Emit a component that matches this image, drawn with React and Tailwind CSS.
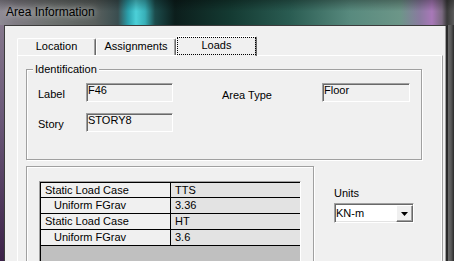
export default function App() {
  const rows = [
    { a: 'Static Load Case', b: 'TTS', indent: false, h: 'h-[15px]' },
    { a: 'Uniform FGrav', b: '3.36', indent: true, h: 'h-[16px]' },
    { a: 'Static Load Case', b: 'HT', indent: false, h: 'h-[16px]' },
    { a: 'Uniform FGrav', b: '3.6', indent: true, h: 'h-[16px]' },
  ];

  const TextBox = ({ w, text }) => (
    <div
      className={`${w} h-[19px] shrink-0 bg-[#f0f0f0] border border-[#a0a0a0] border-b-white border-r-white shadow-[inset_1px_1px_0_#696969] pl-[1px]`}
    >
      {text}
    </div>
  );

  return (
    <div className="w-[454px] h-[261px] overflow-hidden flex flex-col font-['Liberation_Sans',Arial,sans-serif] text-[11px] leading-[13px] text-black">
      {/* Title bar */}
      <div className="h-[25px] shrink-0 pl-[6px] pt-[5px] bg-[linear-gradient(to_bottom,rgba(0,0,0,0.3),rgba(0,0,0,0)_45%),linear-gradient(to_right,#8e8a94_0px,#807c84_15px,#6e7270_50px,#5a605e_95px,#3a4e50_118px,#2aa0ac_128px,#4cd0d8_136px,#38b0b8_145px,#1c4c4c_155px,#0c1e1c_175px,#143a32_230px,#2a5c52_290px,#588a7e_350px,#6c9688_400px,#8a7aa0_420px,#a878b8_432px,#7a6a80_442px,#3a3a3a_447px,#5a5a5a_454px)]">
        <span className="text-[12px] leading-[14px] [text-shadow:0_0_6px_rgba(255,255,255,0.8)]">
          Area Information
        </span>
      </div>

      <div className="flex-1 flex min-h-0">
        {/* left background strip */}
        <div className="w-[4px] shrink-0 bg-[linear-gradient(to_bottom,#85778c,#6a5878_40%,#3c2248)]" />

        {/* dialog client */}
        <div className="w-[444px] shrink-0 bg-[#f0f0f0] border-l border-t border-[#3c3c3c] border-r-2 border-r-[#2a2a2a] shadow-[inset_-1px_0_0_#a0a0a0] flex flex-col pl-[12px] pt-[10px]">
          {/* Tabs */}
          <div className="flex items-end h-[19px] shrink-0">
            <div className="w-[79px] h-[17px] border-t border-l border-white border-r border-r-[#696969] shadow-[inset_-1px_0_0_#a0a0a0] rounded-t-[2px] text-center pt-[1px]">
              Location
            </div>
            <div className="w-[80px] h-[17px] border-t border-l border-white border-r border-r-[#696969] shadow-[inset_-1px_0_0_#a0a0a0] rounded-t-[2px] text-center pt-[1px]">
              Assignments
            </div>
            <div className="relative z-10 -mb-px w-[81px] h-[20px] bg-[#f0f0f0] border-t border-l border-white border-r border-r-[#696969] shadow-[inset_-1px_0_0_#a0a0a0] rounded-t-[2px]">
              <div className="h-[18px] border border-dotted border-black text-center pt-[1px]">
                Loads
              </div>
            </div>
          </div>

          {/* Tab panel */}
          <div className="w-[426px] flex-1 flex flex-col border-t border-l border-white border-r border-r-[#a0a0a0] shadow-[inset_-1px_0_0_#ffffff] pl-[8px] pt-[13px]">
            {/* Identification group */}
            <div className="relative w-[396px] h-[91px] shrink-0 border border-[#a0a0a0] shadow-[inset_1px_1px_0_#ffffff,1px_1px_0_#ffffff] pt-[13px] pl-[11px]">
              <span className="absolute left-[6px] -top-[7px] px-[2px] bg-[#f0f0f0]">
                Identification
              </span>
              <div className="flex items-start">
                <div className="w-[48px] shrink-0 pt-[5px]">Label</div>
                <TextBox w="w-[87px]" text="F46" />
                <div className="ml-[49px] w-[100px] shrink-0 pt-[6px]">Area Type</div>
                <TextBox w="w-[88px]" text="Floor" />
              </div>
              <div className="flex items-start mt-[11px]">
                <div className="w-[48px] shrink-0 pt-[5px]">Story</div>
                <TextBox w="w-[87px]" text="STORY8" />
              </div>
            </div>

            {/* Loads row */}
            <div className="flex mt-[6px]">
              <div className="w-[288px] h-[120px] shrink-0 border border-[#a0a0a0] shadow-[inset_1px_1px_0_#ffffff,1px_1px_0_#ffffff] pl-[12px] pt-[14px]">
                <div className="w-[262px] border-l border-t border-[#a0a0a0] border-r border-r-white">
                  <div className="border-l border-t border-black">
                    {rows.map((r, i) => (
                      <div key={i} className={`flex ${r.h} border-b border-black`}>
                        <div
                          className={`w-[130px] shrink-0 border-r border-black bg-[#f0f0f0] pt-[1px] ${
                            r.indent ? 'pl-[13px]' : 'pl-[4px]'
                          }`}
                        >
                          {r.a}
                        </div>
                        <div className="flex-1 bg-[#e3e3e3] pl-[4px] pt-[1px]">{r.b}</div>
                      </div>
                    ))}
                    <div className="h-[60px] bg-[#c0c0c0]" />
                  </div>
                </div>
              </div>

              {/* Units */}
              <div className="ml-[20px] pt-[21px]">
                <div>Units</div>
                <div className="mt-[3px] w-[80px] h-[20px] flex items-start bg-white border border-[#a0a0a0] border-b-white border-r-white shadow-[inset_1px_1px_0_#696969,inset_-1px_-1px_0_#e3e3e3]">
                  <div className="flex-1 pl-[1px] pt-[3px]">KN-m</div>
                  <div className="mt-[1px] w-[17px] h-[17px] shrink-0 bg-[#f0f0f0] border border-white border-r-[#696969] border-b-[#696969] shadow-[inset_-1px_-1px_0_#a0a0a0] flex items-center justify-center">
                    <svg width="7" height="4" viewBox="0 0 7 4">
                      <path d="M0 0h7L3.5 4z" fill="black" />
                    </svg>
                  </div>
                </div>
              </div>
            </div>
          </div>
        </div>

        {/* right background strip */}
        <div className="flex-1 bg-[linear-gradient(to_right,#6a6a6a,#5a5a5a_50%,#2a2a2a)]" />
      </div>
    </div>
  );
}
